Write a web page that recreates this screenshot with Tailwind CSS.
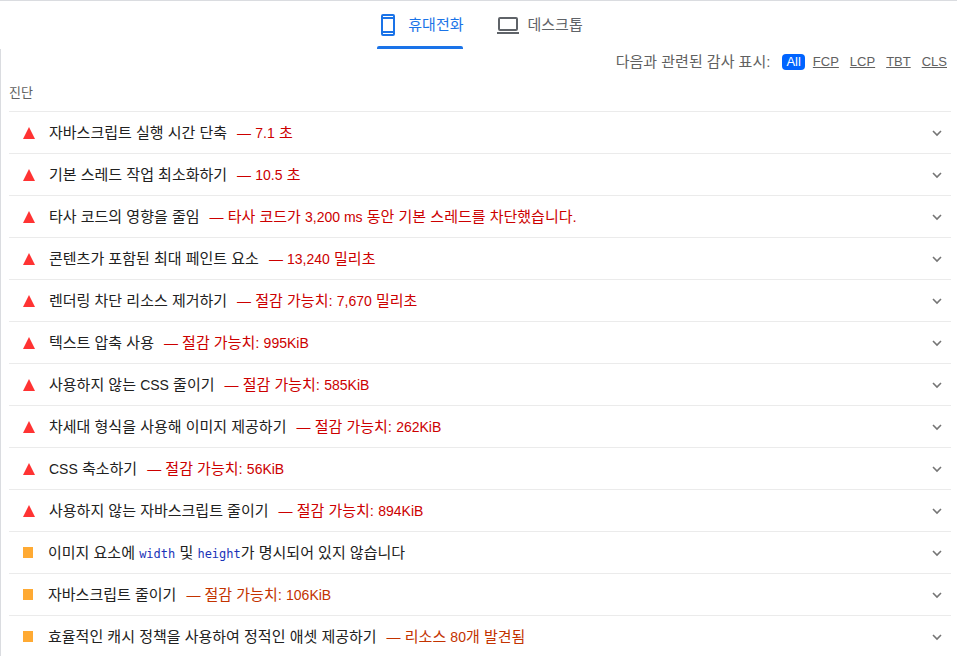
<!DOCTYPE html>
<html lang="ko">
<head>
    <meta charset="UTF-8">
    <meta name="viewport" content="width=device-width, initial-scale=1.0">
    <title>진단</title>
    <script src="https://cdn.jsdelivr.net/npm/@tailwindcss/browser@4"></script>
</head>
<body class="bg-white border-t border-[#dadce0] font-['Liberation_Sans','Noto_Sans_CJK_KR',sans-serif] text-[15px] leading-5 text-[#212121]">
    <!-- Device tabs -->
    <nav class="flex justify-center gap-8 h-12 pl-0.5" role="tablist">
        <button role="tab" aria-selected="true" class="relative flex items-center gap-2 text-[#1a73e8]">
            <svg class="size-6" viewBox="0 0 24 24" fill="currentColor" fill-rule="evenodd"><path d="M7 1h10a2 2 0 0 1 2 2v18a2 2 0 0 1-2 2H7a2 2 0 0 1-2-2V3a2 2 0 0 1 2-2zM7 3v1h10V3zM7 6v12h10V6zM7 20v1h10v-1z"/></svg>
            <span>휴대전화</span>
            <span class="absolute bottom-0 inset-x-px h-[3px] rounded-t-xs bg-[#1a73e8]"></span>
        </button>
        <button role="tab" aria-selected="false" class="flex items-center gap-2 text-[#5f6368]">
            <svg class="size-6" viewBox="0 0 24 24" fill="currentColor" fill-rule="evenodd"><path d="M4 4h16a2 2 0 0 1 2 2v10a2 2 0 0 1-2 2H4a2 2 0 0 1-2-2V6a2 2 0 0 1 2-2zM4 6v10h16V6zM1 19h22v2H1z"/></svg>
            <span>데스크톱</span>
        </button>
    </nav>

    <main class="border-l border-[#dadce0] pl-2 pr-1.5">
        <!-- Metric filter -->
        <div class="flex items-center justify-end h-[26px] pr-1 text-[#616161]">
            <span class="mr-3">다음과 관련된 감사 표시:</span>
            <div class="flex items-center text-[13px] leading-4">
                <input type="radio" name="metric" id="all" class="sr-only" checked>
                <label for="all" class="mr-2 px-1 rounded-sm bg-[#0064ff] text-white">All</label>
                <div class="flex gap-[11px] underline">
                    <span><input type="radio" name="metric" id="fcp" class="sr-only"><label for="fcp">FCP</label></span>
                    <span><input type="radio" name="metric" id="lcp" class="sr-only"><label for="lcp">LCP</label></span>
                    <span><input type="radio" name="metric" id="tbt" class="sr-only"><label for="tbt">TBT</label></span>
                    <span><input type="radio" name="metric" id="cls" class="sr-only"><label for="cls">CLS</label></span>
                </div>
            </div>
        </div>

        <h2 class="flex items-center h-9 text-[13px] text-[#616161]">진단</h2>
        <div id="audits"></div>
    </main>

    <script>
        const small = (text) => `<span class="text-sm">${text}</span>`;
        const code = (text) => `<code class="font-['DejaVu_Sans_Mono',monospace] text-xs text-[#1a33b8]">${text}</code>`;

        const audits = [
            { level: 'fail', title: '자바스크립트 실행 시간 단축', value: `${small('7.1')} 초` },
            { level: 'fail', title: '기본 스레드 작업 최소화하기', value: `${small('10.5')} 초` },
            { level: 'fail', title: '타사 코드의 영향을 줄임', value: `타사 코드가 ${small('3,200 ms')} 동안 기본 스레드를 차단했습니다.` },
            { level: 'fail', title: '콘텐츠가 포함된 최대 페인트 요소', value: `${small('13,240')} 밀리초` },
            { level: 'fail', title: '렌더링 차단 리소스 제거하기', value: `절감 가능치: ${small('7,670')} 밀리초` },
            { level: 'fail', title: '텍스트 압축 사용', value: `절감 가능치: ${small('995KiB')}` },
            { level: 'fail', title: `사용하지 않는 ${small('CSS')} 줄이기`, value: `절감 가능치: ${small('585KiB')}` },
            { level: 'fail', title: '차세대 형식을 사용해 이미지 제공하기', value: `절감 가능치: ${small('262KiB')}` },
            { level: 'fail', title: `${small('CSS')} 축소하기`, value: `절감 가능치: ${small('56KiB')}` },
            { level: 'fail', title: '사용하지 않는 자바스크립트 줄이기', value: `절감 가능치: ${small('894KiB')}` },
            { level: 'average', title: `이미지 요소에 ${code('width')} 및 ${code('height')}가 명시되어 있지 않습니다`, value: '' },
            { level: 'average', title: '자바스크립트 줄이기', value: `절감 가능치: ${small('106KiB')}` },
            { level: 'average', title: '효율적인 캐시 정책을 사용하여 정적인 애셋 제공하기', value: `리소스 ${small('80')}개 발견됨` },
        ];

        const levels = {
            fail: {
                icon: '<svg class="w-3 h-3 mr-3.5" viewBox="0 0 12 12"><path fill="#ff3333" d="M6 0l6 12H0z"/></svg>',
                color: 'text-[#cc0000]',
            },
            average: {
                icon: '<span class="w-2.5 h-[11px] mr-[15px] bg-[#ffaa33]"></span>',
                color: 'text-[#c33300]',
            },
        };

        // Render one expandable row per audit
        document.getElementById('audits').innerHTML = audits.map(({ level, title, value }) => `
            <details class="border-t border-[#ebebeb]">
                <summary class="flex items-center h-[41px] pl-3.5 pr-2 cursor-pointer">
                    ${levels[level].icon}
                    <span>${title}</span>
                    ${value && `<span class="ml-2.5 ${levels[level].color}">${small('—')} ${value}</span>`}
                    <svg class="w-3 h-3 ml-auto" viewBox="0 0 12 12" fill="none" stroke="#757575" stroke-width="1.6"><path d="M2 4l4 4 4-4"/></svg>
                </summary>
            </details>`).join('');
    </script>
</body>
</html>
